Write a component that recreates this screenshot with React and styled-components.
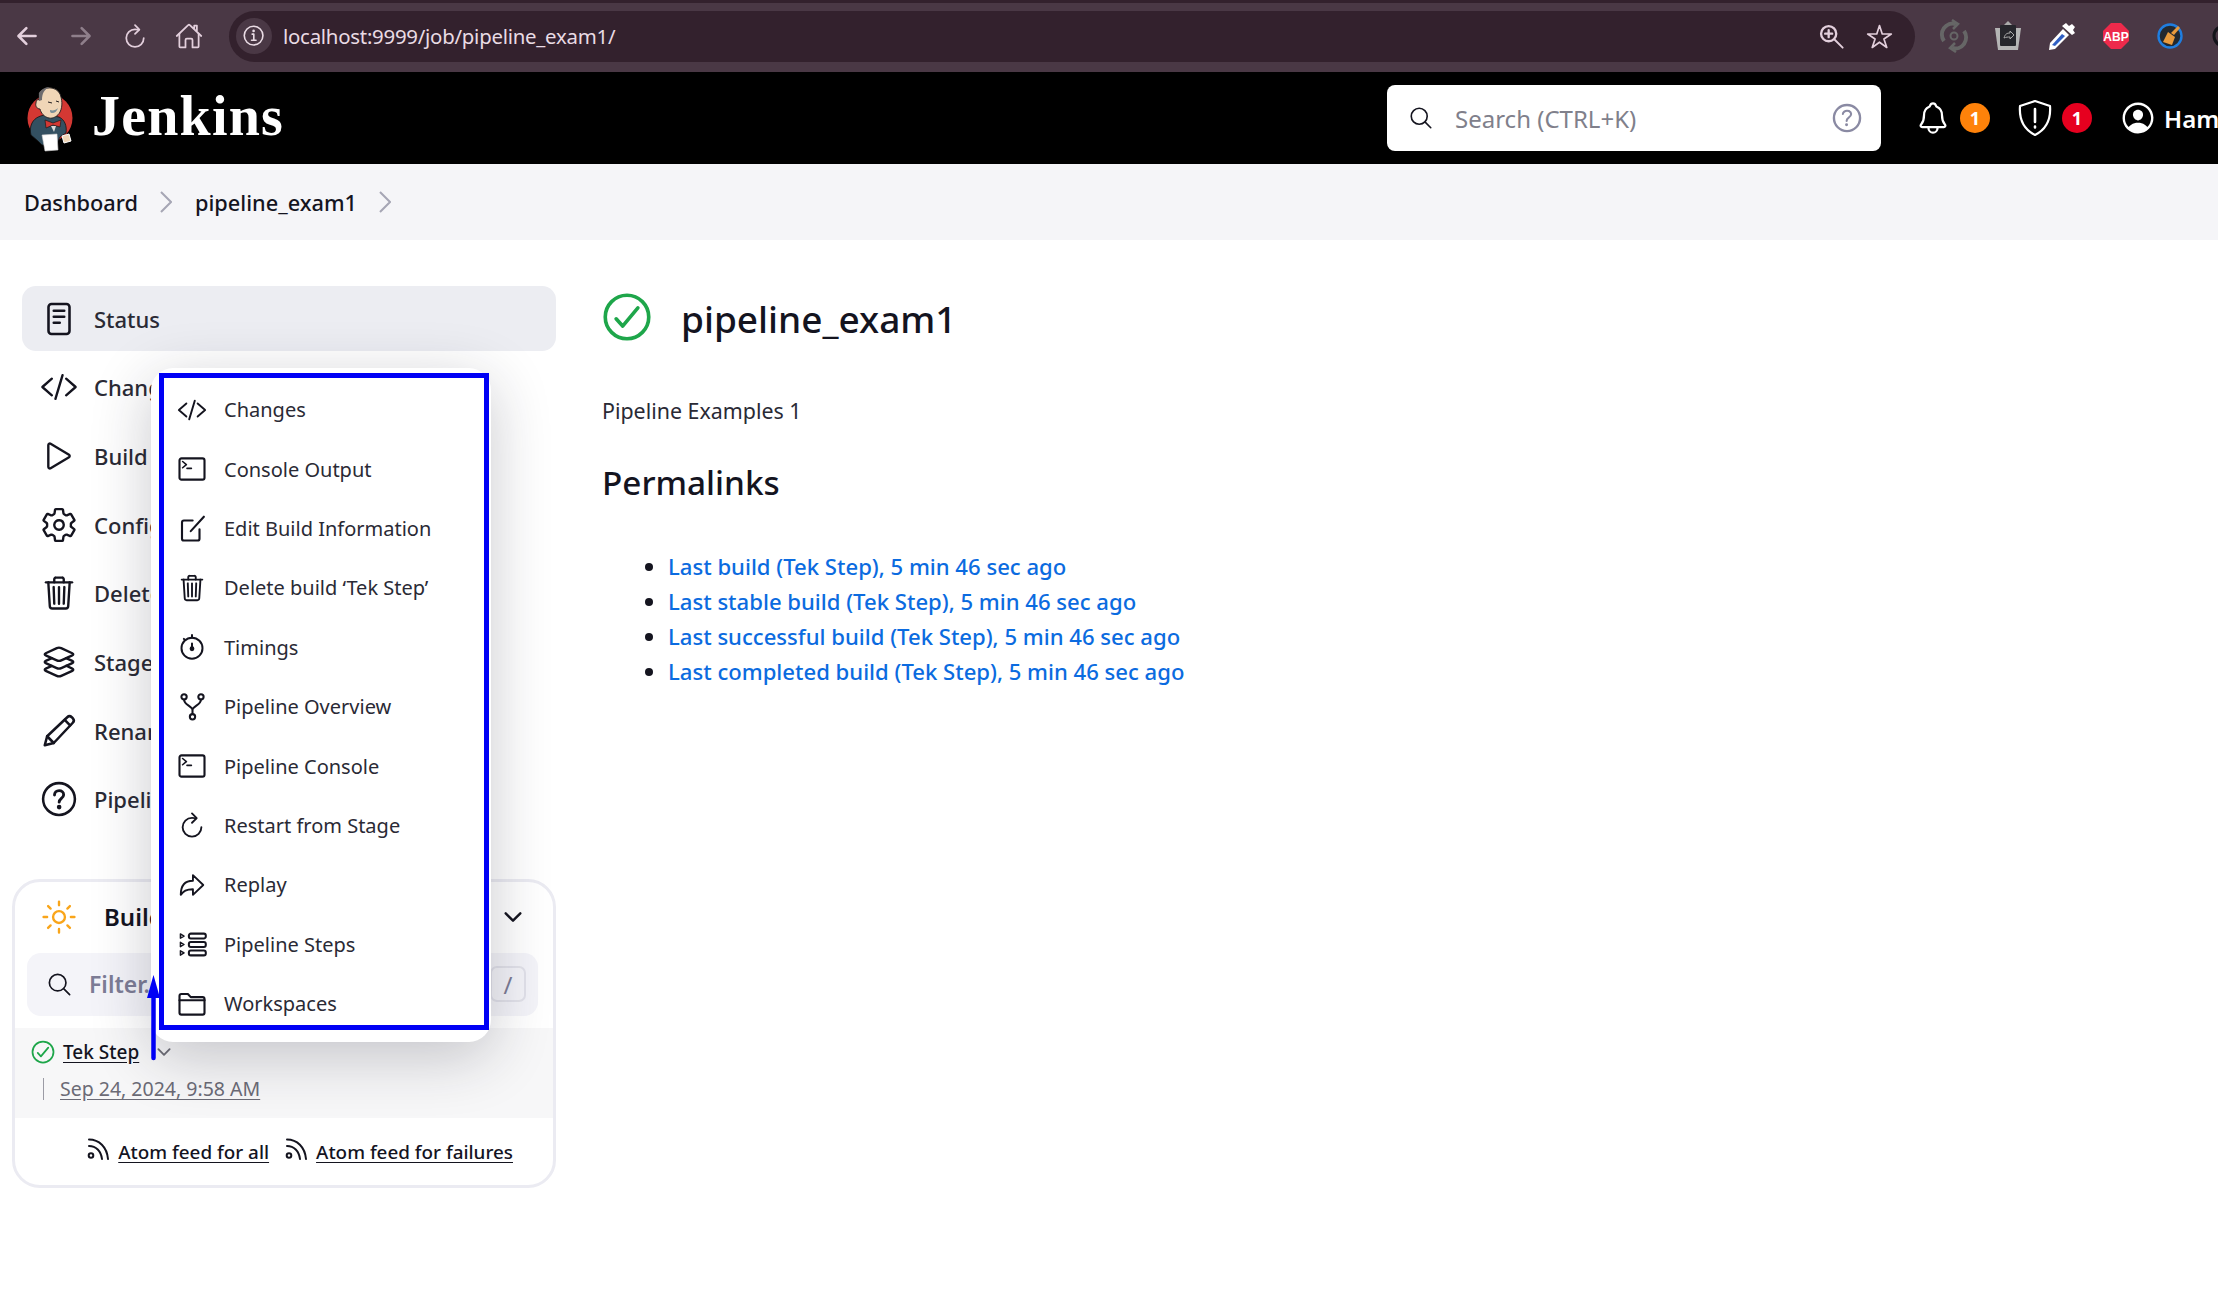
import React from "react";
import styled, { createGlobalStyle } from "styled-components";
import {
  IoArrowBack,
  IoArrowForward,
  IoArrowRedoOutline,
  IoChevronDown,
  IoCodeSlashOutline,
  IoCheckmarkCircleOutline,
  IoHelpCircleOutline,
  IoHomeOutline,
  IoInformationCircleOutline,
  IoLayersOutline,
  IoNotificationsOutline,
  IoPersonCircleOutline,
  IoPlayOutline,
  IoRefreshOutline,
  IoSearchOutline,
  IoSettingsOutline,
  IoStarOutline,
  IoSunnyOutline,
  IoTrashOutline,
} from "react-icons/io5";

const font = `"Noto Sans", "Open Sans", "Liberation Sans", sans-serif`;

const GlobalStyle = createGlobalStyle`
  html, body {
    margin: 0;
    padding: 0;
    background: #fff;
  }
  body {
    font-family: ${font};
    color: #14141f;
  }
  * {
    box-sizing: border-box;
  }
`;

const Page = styled.div`
  position: relative;
  width: 2218px;
  height: 1298px;
  overflow: hidden;
  background: #fff;
`;

/* browser chrome */
const Chrome = styled.div`
  height: 72px;
  background: #4a3845;
  border-top: 3px solid #33212d;
  padding-bottom: 3px;
  display: flex;
  align-items: center;
`;

const NavButton = styled.div`
  width: 54px;
  height: 32px;
  flex: none;
  display: flex;
  align-items: center;
  justify-content: center;
  font-size: ${(p) => p.$size || 28}px;
  color: ${(p) => (p.$dim ? "#8f7f8b" : "#e3cfdc")};
`;

const AddressBar = styled.div`
  width: 1686px;
  height: 51px;
  flex: none;
  margin-left: 13px;
  border-radius: 26px;
  background: #33212d;
  display: flex;
  align-items: center;
  padding: 0 12px 0 7px;
`;

const InfoBubble = styled.div`
  width: 36px;
  height: 36px;
  border-radius: 50%;
  background: #4a3845;
  color: #e9dbe4;
  font-size: 26px;
  display: flex;
  align-items: center;
  justify-content: center;
`;

const Url = styled.span`
  margin-left: 11px;
  font-size: 20.4px;
  letter-spacing: -0.25px;
  color: #e9dbe4;
  flex: 1;
`;

const AddressAction = styled.div`
  width: 48px;
  display: flex;
  justify-content: center;
  color: #e3cfdc;
  font-size: 27px;
`;

const Extensions = styled.div`
  display: flex;
  flex: none;
  align-items: center;
  gap: 20px;
  margin-left: 22px;
`;

const ExtensionSlot = styled.div`
  width: 34px;
  height: 34px;
  display: flex;
  align-items: center;
  justify-content: center;
`;

/* jenkins header */
const Header = styled.header`
  height: 92px;
  background: #000;
  display: flex;
  align-items: center;
  justify-content: space-between;
  padding-left: 24px;
  color: #fff;
`;

const Brand = styled.div`
  display: flex;
  align-items: center;
  gap: 17px;
`;

const BrandName = styled.span`
  font-family: "Liberation Serif", serif;
  font-weight: 700;
  font-size: 56px;
  letter-spacing: 1.2px;
  line-height: 1;
  margin-top: -5px;
`;

const HeaderRight = styled.div`
  width: 831px;
  flex: none;
  display: flex;
  align-items: center;
  white-space: nowrap;
  overflow: hidden;
`;

const SearchBox = styled.div`
  width: 494px;
  height: 66px;
  flex: none;
  background: #fff;
  border-radius: 8px;
  display: flex;
  align-items: center;
  padding: 0 15px 0 21px;
  color: #14141f;
`;

const SearchText = styled.span`
  flex: 1;
  margin-left: 21px;
  font-size: 24px;
  color: #80808b;
`;

const HelpMark = styled.div`
  font-size: 38px;
  color: #8a8aa3;
  display: flex;
`;

const HeaderIcon = styled.div`
  display: flex;
  flex: none;
  font-size: ${(p) => p.$size || 36}px;
  margin-left: ${(p) => p.$gap || 0}px;
`;

const Badge = styled.span`
  width: 30px;
  height: 30px;
  flex: none;
  margin-left: 9px;
  border-radius: 50%;
  background: ${(p) => p.$color};
  color: #fff;
  font-size: 18px;
  font-weight: 700;
  display: flex;
  align-items: center;
  justify-content: center;
`;

const UserName = styled.span`
  margin-left: 7px;
  font-size: 24px;
  font-weight: 600;
`;

/* breadcrumb */
const Breadcrumb = styled.nav`
  height: 76px;
  background: #f5f5f8;
  display: flex;
  align-items: center;
  padding-left: 24px;
  font-size: 21.75px;
  color: #14141f;
`;

const Crumb = styled.span`
  font-weight: 500;
`;

const CrumbArrow = styled.svg`
  width: 12px;
  height: 22px;
  margin: 0 23px 0 22px;
  fill: none;
  stroke: #a6a6b5;
  stroke-width: 2;
`;

/* page body */
const Body = styled.div`
  display: grid;
  grid-template-columns: 544px 1fr;
  column-gap: 46px;
  padding: 46px 0 0 12px;
`;

const Sidebar = styled.aside`
  display: flex;
  flex-direction: column;
`;

const Tasks = styled.div`
  display: flex;
  flex-direction: column;
  gap: 3.7px;
  padding-left: 10px;
`;

const Task = styled.div`
  height: 65px;
  display: flex;
  align-items: center;
  gap: 18px;
  padding-left: 19px;
  font-size: 22px;
  font-weight: 500;
  border-radius: 14px;
  white-space: nowrap;
  background: ${(p) => (p.$active ? "#ecedf2" : "transparent")};
  color: #2a2a35;
`;

const TaskIcon = styled.span`
  width: 35px;
  height: 35px;
  flex: none;
  display: flex;
  align-items: center;
  justify-content: center;
  font-size: 38px;
  color: #14141f;
  svg {
    flex: none;
  }
`;

const BuildCard = styled.section`
  margin-top: 47px;
  height: 309px;
  border: 3px solid #ebebf2;
  border-radius: 28px;
  overflow: hidden;
  display: flex;
  flex-direction: column;
`;

const CardHead = styled.div`
  height: 54px;
  margin-top: 8px;
  display: flex;
  align-items: center;
  padding: 0 27px 0 25px;
  font-size: 24px;
  font-weight: 600;
  color: #14141f;
`;

const SunMark = styled.span`
  display: flex;
  font-size: 38px;
  color: #f9a51a;
`;

const CardTitle = styled.span`
  flex: 1;
  margin-left: 26px;
`;

const ChevronMark = styled.span`
  display: flex;
  font-size: 26px;
  color: #14141f;
`;

const FilterBox = styled.div`
  height: 63px;
  margin: 9px 15px 0 12px;
  border-radius: 14px;
  background: #f4f4f9;
  display: flex;
  align-items: center;
  padding: 0 12px 0 19px;
`;

const FilterIcon = styled.span`
  display: flex;
  font-size: 27px;
  color: #14141f;
`;

const FilterText = styled.span`
  flex: 1;
  margin-left: 16px;
  font-size: 23px;
  font-weight: 600;
  color: #7d7d96;
`;

const SlashKey = styled.span`
  width: 36px;
  height: 36px;
  border: 2px solid #e2e2ea;
  border-radius: 7px;
  display: flex;
  align-items: center;
  justify-content: center;
  font-size: 24px;
  color: #7d7d96;
`;

const BuildRow = styled.div`
  height: 90px;
  margin-top: 12px;
  background: #f7f7f8;
  padding: 11px 0 0 15px;
`;

const BuildLine = styled.div`
  display: flex;
  align-items: center;
  height: 26px;
`;

const BuildStatus = styled.span`
  display: flex;
  font-size: 28px;
  color: #1ea64a;
  margin-left: -1px;
`;

const BuildName = styled.a`
  margin-left: 6px;
  font-size: 19px;
  font-weight: 500;
  color: #14141f;
  text-decoration: underline;
  text-underline-offset: 3px;
`;

const BuildCaret = styled.span`
  display: flex;
  margin-left: 15px;
  font-size: 20px;
  color: #6d6d76;
`;

const DateLine = styled.div`
  margin: 13px 0 0 13px;
  padding-left: 16px;
  height: 22px;
  display: flex;
  align-items: center;
  border-left: 1px solid #9b9ba5;
`;

const BuildDate = styled.a`
  font-size: 19.5px;
  color: #6b6b76;
  text-decoration: underline;
  text-underline-offset: 3px;
`;

const FeedRow = styled.div`
  flex: 1;
  display: flex;
  align-items: center;
  justify-content: flex-end;
  padding: 2px 40px 0 0;
  gap: 15px;
`;

const FeedLink = styled.a`
  display: flex;
  align-items: center;
  gap: 8px;
  font-size: 18.85px;
  font-weight: 500;
  color: #14141f;
  u {
    text-underline-offset: 3px;
  }
  svg {
    margin-bottom: 6px;
  }
`;

const Main = styled.main`
  display: flex;
  flex-direction: column;
`;

const TitleRow = styled.div`
  height: 62px;
  padding-top: 3px;
  display: flex;
  align-items: center;
  gap: 25px;
`;

const SuccessMark = styled.span`
  display: flex;
  font-size: 58px;
  margin: -3px 0 0 -4px;
  color: #1ea64a;
`;

const Title = styled.h1`
  margin: 0;
  font-size: 37px;
  font-weight: 500;
  line-height: 1;
  color: #14141f;
`;

const Description = styled.p`
  margin: 48px 0 0;
  font-size: 21.4px;
  line-height: 30px;
  color: #2a2a35;
`;

const Heading = styled.h2`
  margin: 34px 0 0;
  font-size: 33.3px;
  font-weight: 500;
  line-height: 44px;
  color: #14141f;
`;

const LinkList = styled.ul`
  margin: 45px 0 0;
  padding-left: 66px;
  list-style: disc;
  color: #14141f;
`;

const LinkItem = styled.li`
  height: 35px;
  line-height: 35px;
  font-size: 22.1px;
  a {
    color: #0b6be0;
    font-weight: 500;
  }
`;

/* context menu over the sidebar */
const Popup = styled.div`
  position: absolute;
  left: 151px;
  top: 368px;
  width: 340px;
  height: 674px;
  padding: 5px 2px 0 8px;
  background: #fff;
  border-radius: 22px;
  box-shadow: 0 14px 60px rgba(30, 30, 45, 0.24);
`;

const Highlight = styled.div`
  height: 657px;
  border: 5px solid #0000f5;
  overflow: hidden;
  padding-top: 2px;
`;

const MenuItem = styled.div`
  height: 59.4px;
  display: flex;
  align-items: center;
  gap: 18px;
  padding-left: 14px;
  font-size: 20px;
  color: #2a2a35;
  white-space: nowrap;
`;

const MenuIcon = styled.span`
  width: 28px;
  height: 28px;
  flex: none;
  display: flex;
  align-items: center;
  justify-content: center;
  font-size: 30px;
  color: #14141f;
  svg {
    flex: none;
  }
`;

const AnnotationArrow = styled.svg`
  position: absolute;
  left: 146px;
  top: 974px;
`;

const Line = ({ children, size = 24, view = "0 0 24 24" }) => (
  <svg
    width={size}
    height={size}
    viewBox={view}
    fill="none"
    stroke="currentColor"
    strokeWidth="1.7"
    strokeLinecap="round"
    strokeLinejoin="round"
  >
    {children}
  </svg>
);

const StatusIcon = () => (
  <Line size={36}>
    <rect x="5" y="2" width="14" height="20" rx="2" />
    <path d="M8.5 6.5h7M8.5 10.5h7M8.5 14.5h4" />
  </Line>
);

const PencilIcon = () => (
  <Line size={36}>
    <path d="M2.5 21.5l1.6-6L17.5 2.8a2.2 2.2 0 0 1 3 0l.7.7a2.2 2.2 0 0 1 0 3L8.5 20z" />
    <path d="M15.8 4.6l3.6 3.6M4.1 15.5l4.4 4.5" />
  </Line>
);

const HelpIcon = () => (
  <Line size={36}>
    <circle cx="12" cy="12" r="10.6" />
    <path d="M9 9.4c0-1.8 1.3-3 3.1-3 1.7 0 3 1.1 3 2.7 0 2.4-3 2.6-3 5" strokeWidth="1.9" />
    <circle cx="12.1" cy="17.4" r="0.7" fill="currentColor" />
  </Line>
);

const ConsoleIcon = () => (
  <Line size={30}>
    <rect x="2" y="3.5" width="20" height="17" rx="1.6" />
    <path d="M4.5 6l3 2.5-3 2.5M8 11.5h3.5" strokeWidth="1.3" />
  </Line>
);

const EditIcon = () => (
  <Line size={30}>
    <path d="M12.5 6H5.5A1.5 1.5 0 0 0 4 7.5v13A1.5 1.5 0 0 0 5.5 22h11a1.5 1.5 0 0 0 1.5-1.5V13" />
    <path d="M11 14.5L21.5 3" />
  </Line>
);

const TimerIcon = () => (
  <Line size={28}>
    <circle cx="12" cy="13" r="9" />
    <path d="M12 4V1.8M12 9v3" />
    <circle cx="12" cy="13.5" r="1.2" fill="currentColor" />
    <path d="M5 5l.6.6" />
  </Line>
);

const ForkIcon = () => (
  <Line size={29}>
    <circle cx="5" cy="4" r="2.2" />
    <circle cx="19" cy="4" r="2.2" />
    <circle cx="12" cy="20.5" r="2.2" />
    <path d="M5 6.2c0 5 7 5 7 9v3M19 6.2c0 5-7 5-7 9" />
  </Line>
);

const StepsIcon = () => (
  <Line size={29}>
    <rect x="9" y="3" width="14" height="4" rx="1.6" />
    <rect x="9" y="10" width="14" height="4" rx="1.6" />
    <rect x="9" y="17" width="14" height="4" rx="1.6" />
    <path d="M2 3.2l3 1.8-3 1.8zM2 10.2l3 1.8-3 1.8zM2 17.2l3 1.8-3 1.8z" strokeWidth="1.2" />
  </Line>
);

const FolderIcon = () => (
  <Line size={30}>
    <path d="M2 19V5.5A1.5 1.5 0 0 1 3.5 4h5.2l2.3 2.5h9.5A1.5 1.5 0 0 1 22 8v11a1.5 1.5 0 0 1-1.5 1.5h-17A1.5 1.5 0 0 1 2 19z" />
    <path d="M2 9h20" />
  </Line>
);

const ZoomIcon = () => (
  <Line size={28}>
    <circle cx="10" cy="10" r="6.5" strokeWidth="2" />
    <path d="M15 15l7 7" strokeWidth="1.6" />
    <path d="M10 7v6M7 10h6" strokeWidth="2" />
  </Line>
);

const RssIcon = () => (
  <svg width="24" height="24" viewBox="0 0 24 24" fill="none" stroke="#14141f" strokeWidth="2" strokeLinecap="round">
    <circle cx="5" cy="18.5" r="2.3" />
    <path d="M3 9c7 0 12 5 13 13M3 2.5C13 2.5 21 10 22 22" />
  </svg>
);

const ShieldIcon = () => (
  <svg width="36" height="38" viewBox="0 0 36 38" fill="none" stroke="#fff" strokeWidth="2.2" strokeLinejoin="round" strokeLinecap="round">
    <path d="M18 2l15 5c1 13-3 23-15 29C6 30 2 20 3 7z" />
    <path d="M18 10v13M18 27.5v1" strokeWidth="2.6" />
  </svg>
);

const JenkinsLogo = () => (
  <svg width="51" height="67" viewBox="0 0 51 67">
    <ellipse cx="26" cy="33" rx="22.5" ry="23.5" fill="#d33833" />
    <path d="M8 38c3-6 10-8 15-8l12 2c6 3 8 9 7 16l-6 4-4 8H18l-4-4-7-6c-1-4-1-8 1-12z" fill="#335061" stroke="#111" strokeWidth="0.8" />
    <path d="M15 8c5-7 17-7 21 1 2 5 3 12 0 18-2 4-7 7-11 6-5-1-8-5-9-9-3 0-5-3-4-6 0-3 2-4 3-3 0-3 0-5 0-7z" fill="#f0d6b7" stroke="#231f20" strokeWidth="0.9" />
    <path d="M15 8c3-5 8-6 11-6-6 2-8 7-8 13l-3 1c0-3 0-5 0-8z" fill="#6d6b6d" />
    <path d="M24 17l4 1M32 16l3 1" stroke="#231f20" strokeWidth="1" fill="none" />
    <path d="M26 25c3 1 6 0 8-2-1 3-3 5-6 5-2 0-2-2-2-3z" fill="#49728b" opacity="0.7" />
    <path d="M21 35l8 3 8-3-1 7-7-2-7 3z" fill="#d33833" stroke="#111" strokeWidth="0.6" />
    <path d="M27 41l5 0-2 6z" fill="#dcd9d8" />
    <path d="M18 50l15-1 1 16-13 1z" fill="#fff" stroke="#ccc" strokeWidth="0.6" />
    <path d="M38 51l7-2 2 7-7 2z" fill="#f0d6b7" stroke="#fff" strokeWidth="1" />
  </svg>
);

const SyncExtension = () => (
  <svg width="32" height="34" viewBox="0 0 32 34" fill="none" stroke="#666" strokeWidth="4">
    <path d="M6 22A11 11 0 0 1 18 5" />
    <path d="M26 12a11 11 0 0 1-12 17" />
    <path d="M14 1l6 4-5 5M18 33l-6-4 5-5" strokeWidth="2.5" />
    <circle cx="16" cy="17" r="3.5" strokeWidth="2" />
  </svg>
);

const BasketExtension = () => (
  <svg width="30" height="32" viewBox="0 0 30 32">
    <path d="M11 5l4-4 4 4z" fill="#aaa" />
    <path d="M2 8h26l-3 22H5z" fill="#b5b5b5" />
    <rect x="7" y="5" width="16" height="21" rx="1" fill="#26262c" />
    <path d="M11 18c1-4 3-5 6-5v-2l4 4-4 4v-2c-2 0-4 0-6 1z" fill="none" stroke="#aaa" strokeWidth="1" />
  </svg>
);

const PipetteExtension = () => (
  <svg width="32" height="32" viewBox="0 0 32 32">
    <path d="M20 3l3 3 3-2 3 3-2 3 2 3-3 2-10-9z" fill="#fff" />
    <path d="M17 9l6 6L9 29l-6 1 1-7z" fill="#fff" />
    <path d="M16 14l3 2-10 10-3-1z" fill="#2f5fc4" />
  </svg>
);

const AbpExtension = () => (
  <svg width="26" height="26" viewBox="0 0 26 26">
    <path d="M8 0h10l8 8v10l-8 8H8l-8-8V8z" fill="#ee2a4b" />
    <text x="13" y="17.5" textAnchor="middle" fontSize="12" fontWeight="700" fontFamily="Liberation Sans, sans-serif" fill="#fff">
      ABP
    </text>
  </svg>
);

const BroomExtension = () => (
  <svg width="26" height="26" viewBox="0 0 26 26">
    <circle cx="13" cy="13" r="11.5" fill="#23292f" stroke="#1f7ee0" strokeWidth="2.4" />
    <path d="M21 3l2 2-6 7-3-2z" fill="#e89a3c" />
    <path d="M11 9l7 5-3 8-9-3z" fill="#e89a3c" />
  </svg>
);

const ClippedExtension = () => (
  <svg width="26" height="26" viewBox="0 0 26 26" fill="none" stroke="#14141a" strokeWidth="3">
    <circle cx="13" cy="13" r="10" />
  </svg>
);

const tasks = [
  { icon: <StatusIcon />, label: "Status", active: true },
  { icon: <IoCodeSlashOutline />, label: "Changes" },
  { icon: <IoPlayOutline />, label: "Build Now" },
  { icon: <IoSettingsOutline />, label: "Configure" },
  { icon: <IoTrashOutline />, label: "Delete Pipeline" },
  { icon: <IoLayersOutline />, label: "Stages" },
  { icon: <PencilIcon />, label: "Rename" },
  { icon: <HelpIcon />, label: "Pipeline Syntax" },
];

const menu = [
  { icon: <IoCodeSlashOutline />, label: "Changes" },
  { icon: <ConsoleIcon />, label: "Console Output" },
  { icon: <EditIcon />, label: "Edit Build Information" },
  { icon: <IoTrashOutline />, label: "Delete build ‘Tek Step’" },
  { icon: <TimerIcon />, label: "Timings" },
  { icon: <ForkIcon />, label: "Pipeline Overview" },
  { icon: <ConsoleIcon />, label: "Pipeline Console" },
  { icon: <IoRefreshOutline />, label: "Restart from Stage" },
  { icon: <IoArrowRedoOutline />, label: "Replay" },
  { icon: <StepsIcon />, label: "Pipeline Steps" },
  { icon: <FolderIcon />, label: "Workspaces" },
];

const permalinks = [
  "Last build (Tek Step), 5 min 46 sec ago",
  "Last stable build (Tek Step), 5 min 46 sec ago",
  "Last successful build (Tek Step), 5 min 46 sec ago",
  "Last completed build (Tek Step), 5 min 46 sec ago",
];

const Chevron = () => (
  <CrumbArrow viewBox="0 0 12 22">
    <path d="M1 1l10 10L1 21" />
  </CrumbArrow>
);

export default function App() {
  return (
    <Page>
      <GlobalStyle />
      <Chrome>
        <NavButton><IoArrowBack /></NavButton>
        <NavButton $dim><IoArrowForward /></NavButton>
        <NavButton><IoRefreshOutline /></NavButton>
        <NavButton><IoHomeOutline /></NavButton>
        <AddressBar>
          <InfoBubble><IoInformationCircleOutline /></InfoBubble>
          <Url>localhost:9999/job/pipeline_exam1/</Url>
          <AddressAction><ZoomIcon /></AddressAction>
          <AddressAction><IoStarOutline /></AddressAction>
        </AddressBar>
        <Extensions>
          <ExtensionSlot><SyncExtension /></ExtensionSlot>
          <ExtensionSlot><BasketExtension /></ExtensionSlot>
          <ExtensionSlot><PipetteExtension /></ExtensionSlot>
          <ExtensionSlot><AbpExtension /></ExtensionSlot>
          <ExtensionSlot><BroomExtension /></ExtensionSlot>
          <ExtensionSlot><ClippedExtension /></ExtensionSlot>
        </Extensions>
      </Chrome>

      <Header>
        <Brand>
          <JenkinsLogo />
          <BrandName>Jenkins</BrandName>
        </Brand>
        <HeaderRight>
          <SearchBox>
            <IoSearchOutline size={26} />
            <SearchText>Search (CTRL+K)</SearchText>
            <HelpMark><IoHelpCircleOutline /></HelpMark>
          </SearchBox>
          <HeaderIcon $gap={34}><IoNotificationsOutline /></HeaderIcon>
          <Badge $color="#fe820a">1</Badge>
          <HeaderIcon $gap={27}><ShieldIcon /></HeaderIcon>
          <Badge $color="#e6001f">1</Badge>
          <HeaderIcon $gap={27} $size={38}><IoPersonCircleOutline /></HeaderIcon>
          <UserName>Ham</UserName>
        </HeaderRight>
      </Header>

      <Breadcrumb>
        <Crumb>Dashboard</Crumb>
        <Chevron />
        <Crumb>pipeline_exam1</Crumb>
        <Chevron />
      </Breadcrumb>

      <Body>
        <Sidebar>
          <Tasks>
            {tasks.map((task) => (
              <Task key={task.label} $active={task.active}>
                <TaskIcon>{task.icon}</TaskIcon>
                {task.label}
              </Task>
            ))}
          </Tasks>

          <BuildCard>
            <CardHead>
              <SunMark><IoSunnyOutline /></SunMark>
              <CardTitle>Builds</CardTitle>
              <ChevronMark><IoChevronDown /></ChevronMark>
            </CardHead>
            <FilterBox>
              <FilterIcon><IoSearchOutline /></FilterIcon>
              <FilterText>Filter...</FilterText>
              <SlashKey>/</SlashKey>
            </FilterBox>
            <BuildRow>
              <BuildLine>
                <BuildStatus><IoCheckmarkCircleOutline /></BuildStatus>
                <BuildName>Tek Step</BuildName>
                <BuildCaret><IoChevronDown /></BuildCaret>
              </BuildLine>
              <DateLine>
                <BuildDate>Sep 24, 2024, 9:58 AM</BuildDate>
              </DateLine>
            </BuildRow>
            <FeedRow>
              <FeedLink><RssIcon /><u>Atom feed for all</u></FeedLink>
              <FeedLink><RssIcon /><u>Atom feed for failures</u></FeedLink>
            </FeedRow>
          </BuildCard>
        </Sidebar>

        <Main>
          <TitleRow>
            <SuccessMark><IoCheckmarkCircleOutline /></SuccessMark>
            <Title>pipeline_exam1</Title>
          </TitleRow>
          <Description>Pipeline Examples 1</Description>
          <Heading>Permalinks</Heading>
          <LinkList>
            {permalinks.map((link) => (
              <LinkItem key={link}><a>{link}</a></LinkItem>
            ))}
          </LinkList>
        </Main>
      </Body>

      <Popup>
        <Highlight>
          {menu.map((item) => (
            <MenuItem key={item.label}>
              <MenuIcon>{item.icon}</MenuIcon>
              {item.label}
            </MenuItem>
          ))}
        </Highlight>
      </Popup>

      <AnnotationArrow width="16" height="90" viewBox="0 0 16 90">
        <path d="M7.5 1L14 24H1z" fill="#0000f5" />
        <path d="M7.5 20V84" stroke="#0000f5" strokeWidth="4.5" strokeLinecap="round" />
      </AnnotationArrow>
    </Page>
  );
}
